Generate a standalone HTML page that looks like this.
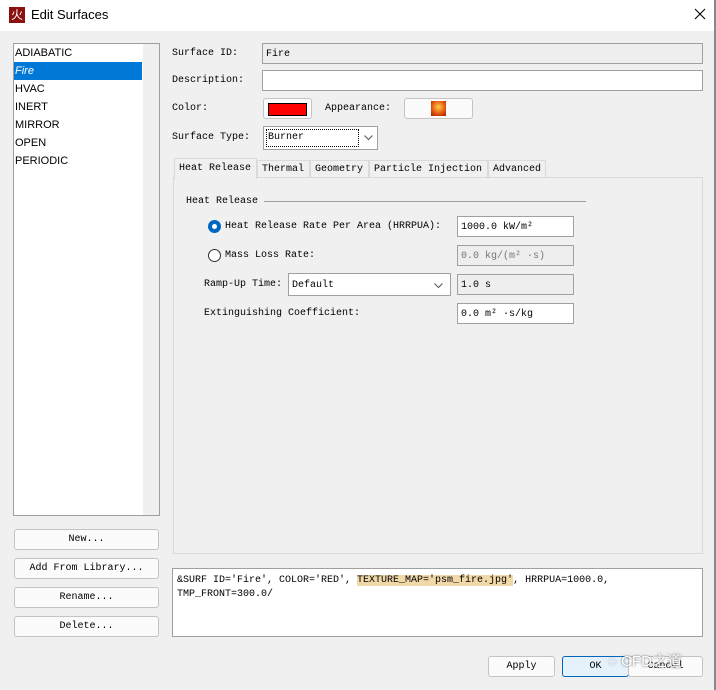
<!DOCTYPE html>
<html><head><meta charset="utf-8"><style>
*{box-sizing:border-box;margin:0;padding:0}
body{width:716px;height:690px;background:#f0f0f0;position:relative;overflow:hidden;font-family:"Liberation Mono","Noto Serif CJK SC",monospace;font-size:10px;color:#000;white-space:nowrap}
.a{position:absolute}
.ls{font-family:"Liberation Sans",sans-serif;font-size:11px}
.in{position:absolute;background:#fff;border:1px solid #a0a0a0;height:21px;padding:4px 3px;line-height:14px}
.dis{background:#eeeeee}
.btn{position:absolute;background:#fbfbfb;border:1px solid #c4c4c4;border-radius:3px;height:21px;text-align:center;line-height:19px}
.lab{position:absolute;line-height:14px}
.tab{position:absolute;top:160px;height:18px;background:#f0f0f0;border:1px solid #dadada;padding:3px 4px;line-height:12px}
</style></head><body>
<div class="a" style="left:0;top:0;width:716px;height:31px;background:#fff"></div>
<div class="a" style="left:9px;top:7px;width:16px;height:16px;background:#8b1010;color:#fff;font-size:12px;line-height:16px;text-align:center;font-family:'Noto Sans CJK SC',sans-serif">火</div>
<div class="a" style="left:31px;top:7px;font-family:'Liberation Sans',sans-serif;font-size:13px">Edit Surfaces</div>
<svg class="a" style="left:694px;top:8px" width="12" height="12"><path d="M1 1L11 11M11 1L1 11" stroke="#000" stroke-width="1.1"/></svg>
<div class="a" style="left:714px;top:0;width:2px;height:690px;background:#888"></div>

<div class="a" style="left:13px;top:43px;width:147px;height:473px;background:#fff;border:1px solid #a0a0a0"></div>
<div class="a" style="left:143px;top:44px;width:16px;height:471px;background:#f0f0f0"></div>
<div class="a" style="left:14px;top:62px;width:128px;height:18px;background:#0078d7"></div>
<div class="a ls" style="left:15px;top:44px;line-height:18px">ADIABATIC<br><span style="color:#fff;font-style:italic">Fire</span><br>HVAC<br>INERT<br>MIRROR<br>OPEN<br>PERIODIC</div>

<div class="btn" style="left:14px;top:529px;width:145px">New...</div>
<div class="btn" style="left:14px;top:558px;width:145px">Add From Library...</div>
<div class="btn" style="left:14px;top:587px;width:145px">Rename...</div>
<div class="btn" style="left:14px;top:616px;width:145px">Delete...</div>

<div class="lab" style="left:172px;top:47px">Surface ID:</div>
<div class="in dis" style="left:262px;top:43px;width:441px">Fire</div>
<div class="lab" style="left:172px;top:74px">Description:</div>
<div class="in" style="left:262px;top:70px;width:441px"></div>
<div class="lab" style="left:172px;top:102px">Color:</div>
<div class="btn" style="left:263px;top:98px;width:49px"><div style="margin:4px auto;width:39px;height:13px;background:#f00;border:1px solid #000"></div></div>
<div class="lab" style="left:325px;top:102px">Appearance:</div>
<div class="btn" style="left:404px;top:98px;width:69px"><div style="margin:2px auto;width:15px;height:15px;background:radial-gradient(circle at 50% 40%,#ffd040,#e05010 60%,#a02000)"></div></div>
<div class="lab" style="left:172px;top:131px">Surface Type:</div>
<div class="in" style="left:263px;top:126px;width:115px;height:24px;padding:2px"><div style="border:1px dotted #000;height:18px;width:93px;padding-left:1px;line-height:16px">Burner</div></div>
<svg class="a" style="left:364px;top:135px" width="9" height="6"><path d="M0.5 0.5L4.5 4.5L8.5 0.5" fill="none" stroke="#555"/></svg>

<div class="a" style="left:173px;top:177px;width:530px;height:377px;border:1px solid #dadada;background:#f0f0f0"></div>
<div class="tab" style="left:174px;top:158px;width:83px;height:21px;border-bottom:none;padding:4px 4px">Heat Release</div>
<div class="tab" style="left:257px;width:53px">Thermal</div>
<div class="tab" style="left:310px;width:59px">Geometry</div>
<div class="tab" style="left:369px;width:119px">Particle Injection</div>
<div class="tab" style="left:488px;width:58px">Advanced</div>

<div class="lab" style="left:186px;top:195px">Heat Release</div>
<div class="a" style="left:264px;top:201px;width:322px;height:1px;background:#a0a0a0"></div>
<div class="a" style="left:208px;top:220px;width:13px;height:13px;border-radius:50%;background:#0067c0"><div style="margin:4px;width:5px;height:5px;border-radius:50%;background:#fff"></div></div>
<div class="lab" style="left:225px;top:220px">Heat Release Rate Per Area (HRRPUA):</div>
<div class="in" style="left:457px;top:216px;width:117px">1000.0 kW/m²</div>
<div class="a" style="left:208px;top:249px;width:13px;height:13px;border-radius:50%;border:1px solid #333;background:#fff"></div>
<div class="lab" style="left:225px;top:249px">Mass Loss Rate:</div>
<div class="in dis" style="left:457px;top:245px;width:117px;color:#777">0.0 kg/(m² ·s)</div>
<div class="lab" style="left:204px;top:278px">Ramp-Up Time:</div>
<div class="in" style="left:288px;top:273px;width:163px;height:23px;padding-top:5px">Default<svg style="position:absolute;right:7px;top:9px" width="9" height="6"><path d="M0.5 0.5L4.5 4.5L8.5 0.5" fill="none" stroke="#555"/></svg></div>
<div class="in dis" style="left:457px;top:274px;width:117px">1.0 s</div>
<div class="lab" style="left:204px;top:307px">Extinguishing Coefficient:</div>
<div class="in" style="left:457px;top:303px;width:117px">0.0 m² ·s/kg</div>

<div class="a" style="left:172px;top:568px;width:531px;height:69px;background:#fff;border:1px solid #a0a0a0;padding:5px 4px;line-height:14px">&amp;SURF ID='Fire', COLOR='RED', <span style="background:#f0d8a8">TEXTURE_MAP='psm_fire.jpg'</span>, HRRPUA=1000.0,<br>TMP_FRONT=300.0/</div>

<div class="btn" style="left:488px;top:656px;width:67px">Apply</div>
<div class="btn" style="left:562px;top:656px;width:67px;border-color:#0067c0;background:#e5f1fb">OK</div>
<div class="btn" style="left:628px;top:656px;width:75px">Cancel</div>
<div class="a" style="left:608px;top:650px;font-family:'Liberation Sans','Noto Sans CJK SC',sans-serif;font-size:15px;color:#fff;text-shadow:0 0 2px #555">◌ CFD之道</div>
</body></html>
